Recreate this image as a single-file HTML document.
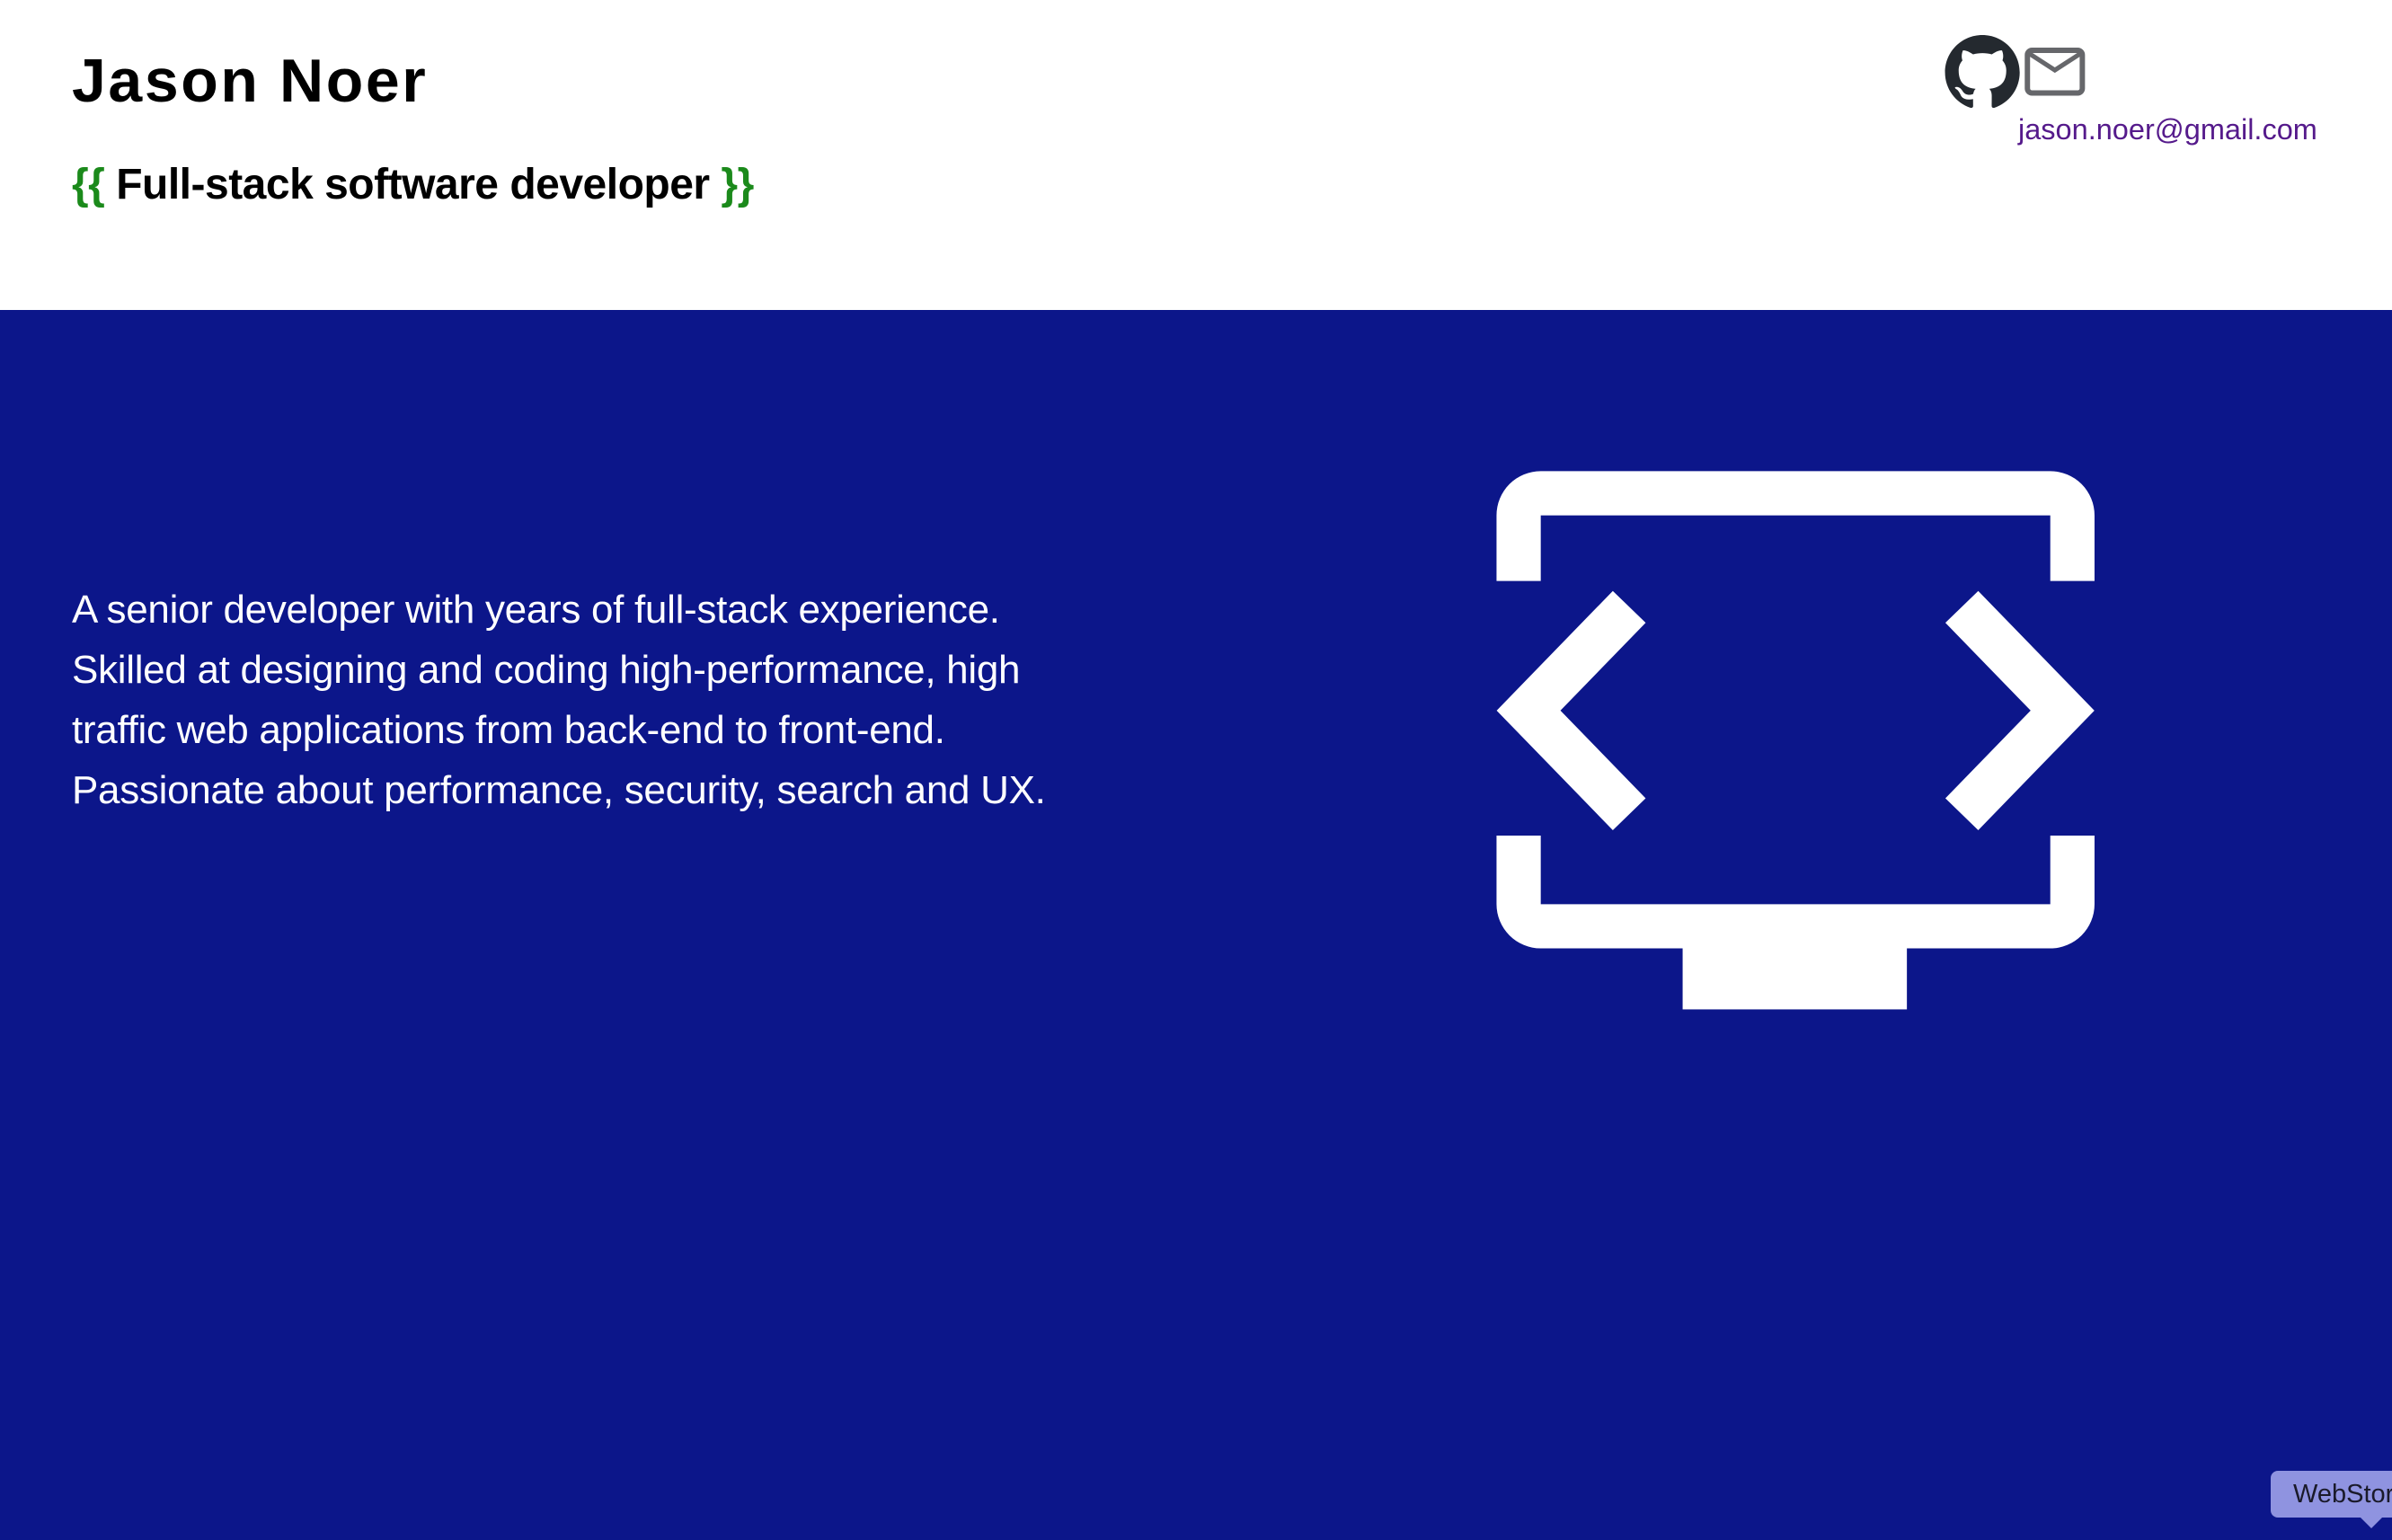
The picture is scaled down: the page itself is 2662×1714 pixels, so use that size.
<!DOCTYPE html>
<html><head><meta charset="utf-8"><style>
html,body{margin:0;padding:0;width:2662px;height:1714px;overflow:hidden;background:#fff;font-family:"Liberation Sans",sans-serif;position:relative}
.band{position:absolute;left:0;top:345px;width:2662px;height:1369px;background:#0c168a}
h1{position:absolute;left:80px;top:50px;margin:0;font-size:68px;letter-spacing:2.6px;font-weight:bold;color:#000;line-height:80px}
.sub{position:absolute;left:80px;top:176px;margin:0;font-size:48px;font-weight:bold;color:#000;line-height:60px;letter-spacing:-0.5px}
.sub b{color:#1b8a1b}
.para{position:absolute;left:80px;top:645px;width:1400px;font-size:44px;line-height:67px;color:#fff;letter-spacing:-0.3px;white-space:nowrap}
.mail{position:absolute;left:2246px;top:126px;font-size:32.5px;color:#551a8b}
.tip{position:absolute;left:2527px;top:1637px;width:200px;height:52px;background:#8f93e0;border-radius:8px;font-size:29px;color:#1a1a2a;line-height:52px;padding-left:25px;box-sizing:border-box}
.tip:after{content:"";position:absolute;left:100px;top:52px;border:12px solid transparent;border-top-color:#8f93e0}
svg.ic{position:absolute;left:0;top:0}
</style></head><body>
<div class="band"></div>
<h1>Jason Noer</h1>
<div class="sub"><b>{{</b> Full-stack software developer <b>}}</b></div>
<div class="mail">jason.noer@gmail.com</div>
<div class="para">A senior developer with years of full-stack experience.<br>Skilled at designing and coding high-performance, high<br>traffic web applications from back-end to front-end.<br>Passionate about performance, security, search and UX.</div>
<svg class="ic" width="2662" height="1714" viewBox="0 0 1568 1010" preserveAspectRatio="none">
<g fill="#fff">
<path d="M981,381 V338 a29,29 0 0 1 29,-29 H1344 a29,29 0 0 1 29,29 V381 H1344 V338 H1010 V381 Z"/>
<path d="M981,548 H1010 V593 H1344 V548 H1373 V593 a29,29 0 0 1 -29,29 H1010 a29,29 0 0 1 -29,-29 Z"/>
<rect x="1103" y="621" width="147" height="41"/>
</g>
<g fill="none" stroke="#fff" stroke-width="30" stroke-linecap="butt" stroke-linejoin="miter">
<polyline points="1068,398 1002,466 1068,534"/>
<polyline points="1286,398 1352,466 1286,534"/>
</g>
<g transform="translate(1275,23) scale(3.06)">
<path fill="#24292f" d="M8 0C3.580 0 0 3.58 0 8c0 3.540 2.29 6.53 5.47 7.59.4.07.55-.17.55-.38 0-.19-.01-.82-.01-1.490-2.01.37-2.53-.49-2.69-.94-.09-.23-.48-.94-.82-1.13-.28-.15-.68-.52-.01-.53.63-.01 1.08.58 1.23.82.72 1.21 1.87.87 2.33.66.07-.52.28-.87.51-1.07-1.78-.2-3.64-.89-3.64-3.95 0-.87.31-1.59.82-2.15-.08-.2-.36-1.02.08-2.12 0 0 .67-.21 2.2.82.64-.18 1.32-.27 2-.27.68 0 1.36.09 2 .27 1.53-1.04 2.2-.82 2.2-.82.44 1.1.16 1.92.08 2.12.51.56.82 1.27.82 2.15 0 3.07-1.87 3.75-3.65 3.95.29.25.54.73.54 1.48 0 1.07-.01 1.93-.01 2.2 0 .21.15.46.55.38A8.013 8.013 0 0016 8c0-4.42-3.58-8-8-8z"/>
</g>
<rect x="1329" y="33" width="36" height="28" rx="3" fill="none" stroke="#66676b" stroke-width="3.5"/>
<polyline points="1330,35 1347,46 1364,35" fill="none" stroke="#66676b" stroke-width="3"/>
</svg>
<div class="tip">WebStorm</div>
</body></html>
